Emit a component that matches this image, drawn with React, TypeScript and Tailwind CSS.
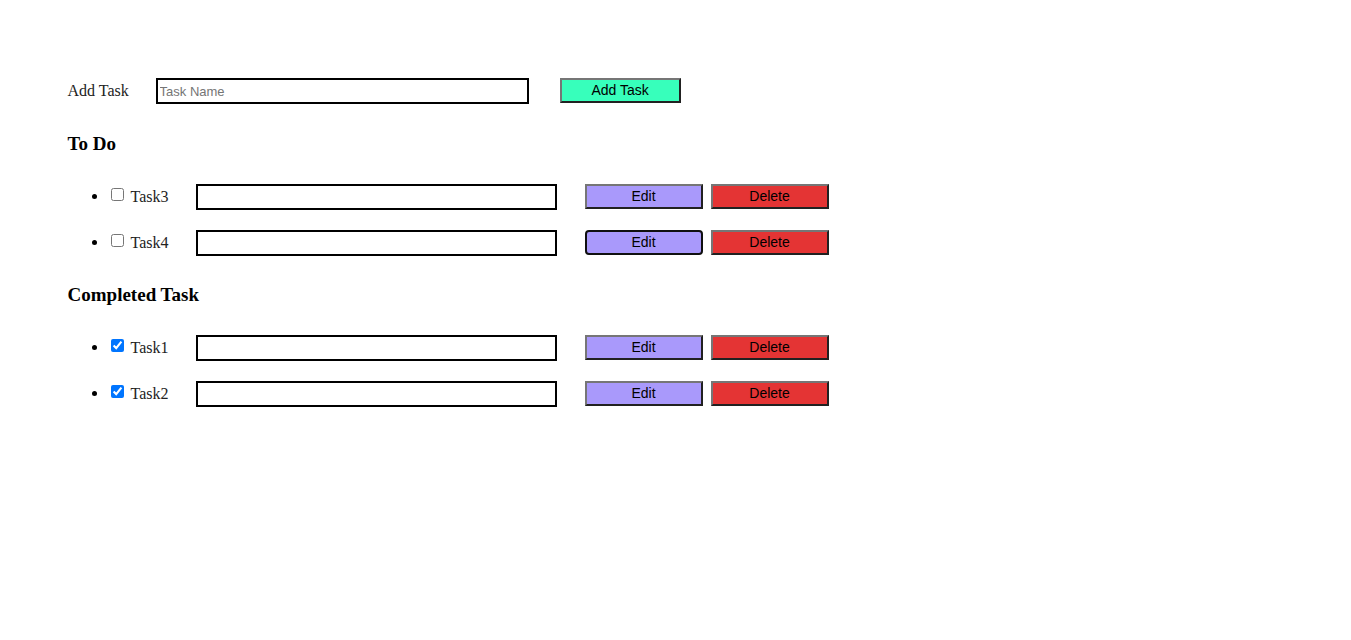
import { useState } from "react";

type Task = { id: number; name: string; done: boolean; active?: boolean };

const initialTasks: Task[] = [
  { id: 3, name: "Task3", done: false },
  { id: 4, name: "Task4", done: false, active: true },
  { id: 1, name: "Task1", done: true },
  { id: 2, name: "Task2", done: true },
];

const buttonBase =
  "h-[25px] border-2 text-center font-['Liberation_Sans',Arial,sans-serif] text-[14px] leading-[21px] text-black";
const bevel = "border-t-[#767676] border-l-[#767676] border-r-[#212121] border-b-[#212121]";
const inputBase =
  "h-[26px] min-w-0 flex-1 border-2 border-black bg-white px-[2px] font-['Liberation_Sans',Arial,sans-serif] text-[13px] text-black placeholder:text-[#757575]";

function TaskRow({ task, onToggle, onDelete }: { task: Task; onToggle: () => void; onDelete: () => void }) {
  const checkId = `task-${task.id}`;
  return (
    <li>
      <div className="flex items-start">
        <input
          id={checkId}
          type="checkbox"
          checked={task.done}
          onChange={onToggle}
          className="mt-1 mr-[7px] ml-[3px] h-[13px] w-[13px] shrink-0"
        />
        <label htmlFor={checkId} className="w-[65px] shrink-0 text-[#222222]">
          {task.name}
        </label>
        <input type="text" aria-label={`New name for ${task.name}`} className={inputBase} />
        <button
          type="button"
          className={`${buttonBase} ${task.active ? "rounded-[4px] border-[#101010]" : bevel} ml-7 w-[118px] bg-[#a999fb]`}
        >
          Edit
        </button>
        <button type="button" onClick={onDelete} className={`${buttonBase} ${bevel} ml-2 w-[118px] bg-[#e43434]`}>
          Delete
        </button>
      </div>
    </li>
  );
}

export default function App() {
  const [tasks, setTasks] = useState(initialTasks);
  const [name, setName] = useState("");

  const addTask = () => {
    if (!name.trim()) return;
    setTasks([...tasks, { id: Date.now(), name, done: false }]);
    setName("");
  };

  const renderRows = (done: boolean) =>
    tasks
      .filter((task) => task.done === done)
      .map((task) => (
        <TaskRow
          key={task.id}
          task={task}
          onToggle={() => setTasks(tasks.map((t) => (t.id === task.id ? { ...t, done: !t.done } : t)))}
          onDelete={() => setTasks(tasks.filter((t) => t.id !== task.id))}
        />
      ));

  return (
    <main className="bg-white px-[5%] pt-[78px] pb-10 font-['Liberation_Serif','Times_New_Roman',serif] text-[16px] leading-[25px] text-black">
      <form
        className="flex max-w-[613px] items-start"
        onSubmit={(event) => {
          event.preventDefault();
          addTask();
        }}
      >
        <label htmlFor="new-task" className="w-[88px] shrink-0 text-[#222222]">
          Add Task
        </label>
        <input
          id="new-task"
          type="text"
          placeholder="Task Name"
          value={name}
          onChange={(event) => setName(event.target.value)}
          className={inputBase}
        />
        <button type="submit" className={`${buttonBase} ${bevel} ml-[31px] w-[121px] bg-[#37ffbb]`}>
          Add Task
        </button>
      </form>

      <h3 className="mt-[27px] text-[19px] font-bold">To Do</h3>
      <ul className="mt-[27px] flex max-w-[761px] list-disc flex-col gap-[19px] pl-10">{renderRows(false)}</ul>

      <h3 className="mt-[26px] text-[19px] font-bold">Completed Task</h3>
      <ul className="mt-[27px] flex max-w-[761px] list-disc flex-col gap-[19px] pl-10">{renderRows(true)}</ul>
    </main>
  );
}
